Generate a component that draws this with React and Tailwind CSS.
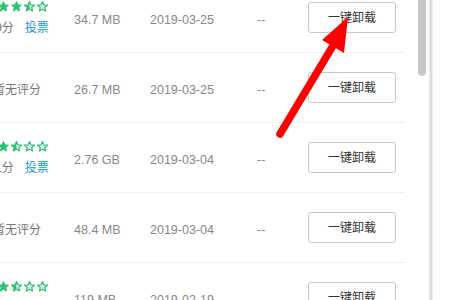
import React from 'react';

const GREEN = '#27c46f';

const rows = [
  { stars: 3.5, score: '6.9分', size: '34.7 MB', date: '2019-03-25' },
  { stars: null, size: '26.7 MB', date: '2019-03-25' },
  { stars: 2.5, score: '5.1分', size: '2.76 GB', date: '2019-03-04' },
  { stars: null, size: '48.4 MB', date: '2019-03-04' },
  { stars: 2.5, score: '5.1分', size: '119 MB', date: '2019-02-19' },
];

const STAR = '5.5,0.6 6.9,3.9 10.4,4.2 7.7,6.5 8.6,10 5.5,8.1 2.4,10 3.3,6.5 0.6,4.2 4.1,3.9';

const Star = ({ kind, id }) => (
  <svg width="11" height="11" viewBox="0 0 11 11">
    {kind === 'half' && (
      <defs>
        <clipPath id={id}>
          <rect x="0" y="0" width="5.5" height="11" />
        </clipPath>
      </defs>
    )}
    {kind === 'full' && <polygon points={STAR} fill={GREEN} stroke={GREEN} strokeWidth="1" strokeLinejoin="round" />}
    {kind !== 'full' && (
      <polygon points={STAR} fill="none" stroke={GREEN} strokeWidth="1.2" strokeLinejoin="round" />
    )}
    {kind === 'half' && (
      <polygon points={STAR} fill={GREEN} clipPath={`url(#${id})`} />
    )}
  </svg>
);

const Stars = ({ value, rowKey }) => (
  <div className="flex h-[11px] gap-[2px]">
    {[0, 1, 2, 3, 4].map((i) => {
      const kind = value >= i + 1 ? 'full' : value > i ? 'half' : 'empty';
      return <Star key={i} kind={kind} id={`half-${rowKey}-${i}`} />;
    })}
  </div>
);

const Row = ({ row, idx }) => (
  <div className="h-[70px] border-b border-[#f0f0f0] flex items-center">
    <div className="flex items-center -ml-[28px]">
      {/* rating */}
      <div className="w-[90px] flex flex-col items-center">
        {row.stars != null ? (
          <div className="flex flex-col items-center gap-[8px] mt-[1px]">
            <Stars value={row.stars} rowKey={idx} />
            <div className="flex items-center gap-[11px] text-[12px] leading-[16px]">
              <span className="text-[#777]">{row.score}</span>
              <span className="text-[#1a98f5]">投票</span>
            </div>
          </div>
        ) : (
          <span className="text-[12px] leading-[16px] text-[#777] mt-[4px]">暂无评分</span>
        )}
      </div>
      <div className="w-[88px] pl-[12px] text-[12.5px] text-[#888] mt-[5px]">{row.size}</div>
      <div className="w-[107px] text-[12.5px] text-[#888] mt-[5px]">{row.date}</div>
      <div className="w-[51px] text-[12.5px] text-[#888] mt-[5px]">--</div>
      <button className="w-[88px] h-[31px] border border-[#c8c8c8] rounded-[3px] bg-white text-[12px] text-[#333] pt-[1px]">
        一键卸载
      </button>
    </div>
  </div>
);

export default function App() {
  return (
    <div
      className="relative flex w-[450px] h-[300px] bg-white overflow-hidden"
      style={{ fontFamily: '"Liberation Sans", "Noto Sans CJK SC", sans-serif' }}
    >
      <div className="w-[405px] shrink-0 overflow-hidden">
        <div className="-mt-[17px]">
          {rows.map((r, i) => (
            <Row key={i} row={r} idx={i} />
          ))}
        </div>
      </div>
      <div className="w-[13px] shrink-0" />
      <div className="w-[8px] shrink-0">
        <div className="h-[76px] bg-[#c9c9c9] rounded-b-[4px]" />
      </div>
      <div className="w-[3px] shrink-0" />
      <div className="w-[4px] shrink-0 bg-[#dcdcdc] border-x border-[#ececec]" />

      <svg className="absolute left-0 top-0 pointer-events-none" width="450" height="300">
        <line x1="280" y1="134" x2="334" y2="44" stroke="#ff0000" strokeWidth="7.5" strokeLinecap="round" />
        <polygon points="348,17 322,40 344,53" fill="#ff0000" />
      </svg>
    </div>
  );
}
